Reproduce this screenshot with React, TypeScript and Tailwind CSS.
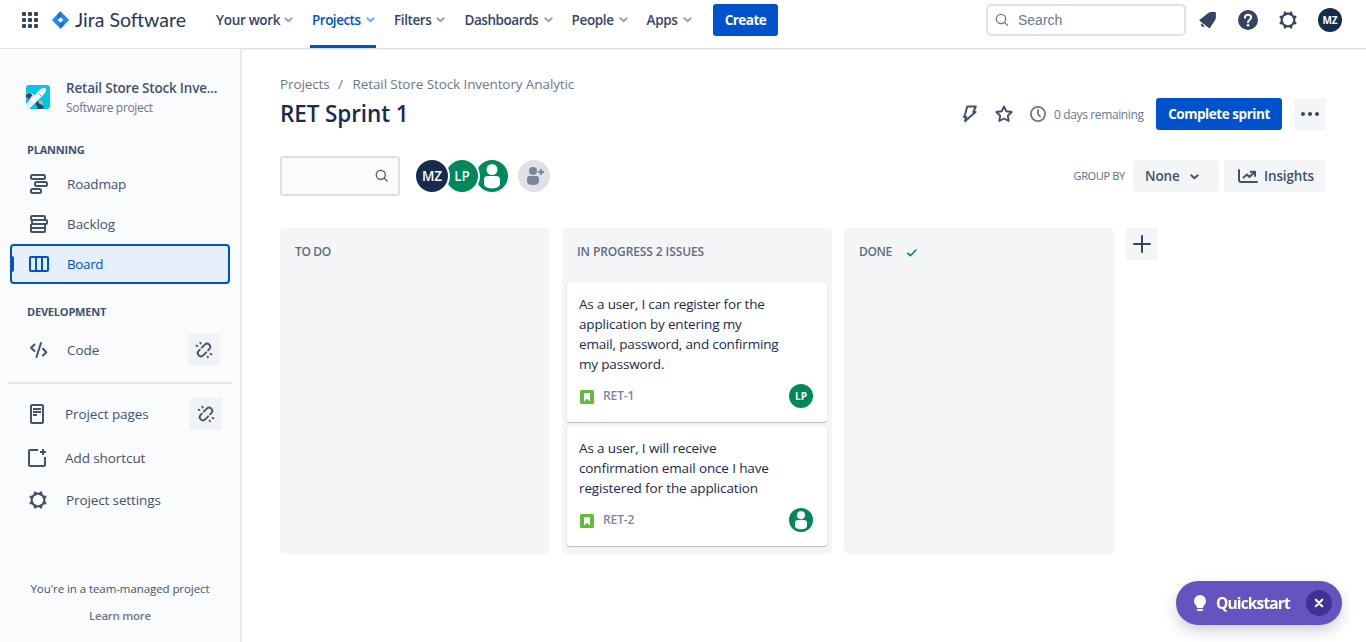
import React from "react";

const Chevron = ({ className }: { className: string }) => (
  <svg width="9" height="6" viewBox="0 0 9 6" className={className} fill="none" stroke="currentColor" strokeWidth="1.9" strokeLinecap="round" strokeLinejoin="round">
    <path d="M1.3 1.2 4.5 4.2 7.7 1.2" />
  </svg>
);

const SearchIcon = ({ size }: { size: number }) => (
  <svg width={size} height={size} viewBox="0 0 14 14" fill="none" stroke="currentColor" strokeWidth="1.3" strokeLinecap="round">
    <circle cx="6" cy="6" r="4.7" />
    <path d="M9.5 9.5 12.6 12.4" />
  </svg>
);

const teeth = [22.5, 67.5, 112.5, 157.5, 202.5, 247.5, 292.5, 337.5];

const Gear = () => (
  <svg width="20" height="20" viewBox="0 0 20 20" fill="none" stroke="currentColor">
    <circle cx="10" cy="10" r="6.4" strokeWidth="2.1" />
    {teeth.map((a) => (
      <path key={a} d="M10 2.3V3.5" strokeWidth="2.8" strokeLinecap="round" transform={`rotate(${a} 10 10)`} />
    ))}
  </svg>
);

const Person = ({ size }: { size: number }) => (
  <svg width={size} height={size} viewBox="0 0 32 32">
    <circle cx="16" cy="16" r="16" fill="#00875a" />
    <circle cx="16" cy="9.5" r="5.5" fill="#fff" />
    <path d="M8 19.500c0-2.400 1.600-3.500 4-3.500h8c2.400 0 4 1.100 4 3.500V24c0 2.600-3.600 4.400-8 4.400S8 26.600 8 24Z" fill="#fff" />
  </svg>
);

const Unlink = () => (
  <svg width="18" height="18" viewBox="0 0 18 18" fill="none" stroke="currentColor" strokeWidth="1.8" strokeLinecap="round">
    <path d="M6.800 6.700 9.800 3.700A3.100 3.100 0 0 1 14.300 8.200L13.100 9.400" />
    <path d="M11.200 11.300 8.200 14.300A3.100 3.100 0 0 1 3.700 9.800L4.900 8.600" />
    <path d="M5.300 1.600 5.600 2.500M1.500 4.600 2.500 5M12.600 15.500 12.900 16.400M15.500 13 16.500 13.400" />
  </svg>
);

const navItems = [
  { label: "Your work", w: "w-[96px]", t: "w-[68px]", track: "tracking-[-0.3px]", active: false },
  { label: "Projects", w: "w-[82px]", t: "w-[54px]", track: "tracking-[-0.5px]", active: true },
  { label: "Filters", w: "w-[70.5px]", t: "w-[41.5px]", track: "tracking-[-0.4px]", active: false },
  { label: "Dashboards", w: "w-[107px]", t: "w-[79px]", track: "tracking-[-0.45px]", active: false },
  { label: "People", w: "w-[75px]", t: "w-[47px]", track: "tracking-[-0.35px]", active: false },
  { label: "Apps", w: "w-[66.5px]", t: "w-[36px]", track: "tracking-[-0.3px]", active: false },
];

function Header() {
  return (
    <header className="flex h-[49px] shrink-0 items-start border-b border-[#dfe1e6] bg-white shadow-[0_1px_1px_#f1f2f4]">
      <div className="flex h-10 w-[52px] items-center pl-[22px]">
        <svg width="16" height="16" viewBox="0 0 16 16" fill="#344563">
          {[0, 6, 12].map((y) => [0, 6, 12].map((x) => <rect key={`${x}-${y}`} x={x} y={y} width="4" height="4" rx="1" />))}
        </svg>
      </div>
      <div className="flex h-10 w-[164px] items-center">
        <svg width="17" height="18" viewBox="0 0 17 18">
          <path d="M8.500 0.300 16.700 8.400Q17.200 9 16.700 9.600L8.500 17.700 0.300 9.600Q-.2 9 .3 8.400Z" fill="#2684ff" />
          <path d="M8.500.3 9 6.200 6.200 9 5.300 3.700Z" fill="#1868db" />
          <path d="M8.500 17.700 8 11.800 10.800 9 11.700 14.300Z" fill="#1868db" />
          <path d="M8.500 6.200 11.300 9 8.500 11.800 5.700 9Z" fill="#fff" />
        </svg>
        <span className="ml-[6px] whitespace-nowrap font-['Lato'] text-[19.5px] leading-6 text-[#253858]">Jira Software</span>
      </div>
      {navItems.map((n) => (
        <div key={n.label} className={`flex h-12 items-start ${n.w} ${n.active ? "text-[#0052cc]" : "text-[#344563]"}`}>
          <div className={n.active ? "-ml-0.5 flex h-12 w-[66px] items-start border-b-[3px] border-[#0052cc] pl-0.5" : "flex"}>
            <div className="flex h-10 items-center">
              <span className={`whitespace-nowrap text-[13.5px] font-semibold ${n.t} ${n.track}`}>{n.label}</span>
              <Chevron className="shrink-0 opacity-50" />
            </div>
          </div>
        </div>
      ))}
      <button className="mt-1 h-8 w-[65px] rounded-[3px] bg-[#0052cc] text-[13.5px] font-bold tracking-[-0.5px] text-white">Create</button>
      <div className="ml-auto mt-1 flex h-8 w-[200px] items-center rounded-[5px] border-2 border-[#dfe1e6] pl-[7px] text-[#6b778c]">
        <SearchIcon size={14} />
        <span className="ml-[9px] font-['Liberation_Sans'] text-[14px]">Search</span>
      </div>
      <div className="flex h-10 w-[180px] items-center text-[#344563]">
        <svg width="18" height="18" viewBox="0 0 18 18" className="ml-[13px]" fill="currentColor">
          <path d="M.8 9.900C.3 9.300.6 8.600 1.300 8.300L9.300 1.900C10.600.9 12 .8 13.300 1H16.200Q16.800 1 16.900 1.700V5.600C17 7 16.700 8.200 16 9.300L11.200 16.500C10.700 17.100 10 17.200 9.500 16.700Z" />
          <path d="M2.600 12.200A2.100 2.100 0 1 0 5.600 15.200Z" />
        </svg>
        <svg width="20" height="20" viewBox="0 0 20 20" className="ml-[21px]" fill="none">
          <circle cx="10" cy="10" r="10" fill="currentColor" />
          <path d="M6.900 7.800C6.900 5.900 8.200 4.800 10 4.800s3.100 1.100 3.100 2.700c0 2.100-3.100 2.300-3.100 4.800" stroke="#fff" strokeWidth="2" strokeLinecap="round" />
          <circle cx="10" cy="15.300" r="1.300" fill="#fff" />
        </svg>
        <div className="ml-5"><Gear /></div>
        <div className="ml-5 flex size-6 items-center justify-center rounded-full bg-[#172b4d] text-[10px] font-bold text-white">MZ</div>
      </div>
    </header>
  );
}

function Sidebar() {
  return (
    <aside className="flex w-[242px] shrink-0 flex-col border-r-2 border-[#e9eaec] bg-[#fafbfc] text-[13.5px] tracking-[-0.08px] text-[#42526e]">
      <div className="flex h-[89px] pl-[26px] pt-[29px]">
        <svg width="24" height="24" viewBox="0 0 24 24" className="mt-[7px] shrink-0">
          <rect width="24" height="24" rx="3" fill="#00c7e6" />
          <path d="M0 8.500 3.500 7 8 9.500 8.500 12 5 15 0 11.500Z" fill="#dfe1e6" />
          <path d="M0 9.500 3.500 7.500 6.500 10 3.500 14 0 12Z" fill="#344563" />
          <path d="M9.500 18 13 15.500 17.500 22V24H12Z" fill="#344563" />
          <path d="M13 14.500 17 17 16 20 12.500 18Z" fill="#b3bac5" />
          <path d="M0 19 14 4.500Q17.500 2 20 3.200 20.800 6 18 9L3 24H1L0 23Z" fill="#fff" />
          <path d="M0 19 5 16 8 19 3 24H1L0 23Z" fill="#ebecf0" />
          <path d="M13 9 15 11" stroke="#8993a4" />
        </svg>
        <div className="ml-4 h-10">
          <div className="whitespace-nowrap font-semibold leading-5 tracking-[-0.2px]">Retail Store Stock Inve...</div>
          <div className="whitespace-nowrap text-[12px] leading-5 tracking-[-0.33px] text-[#6b778c]">Software project</div>
        </div>
      </div>
      <div className="h-[26px] pl-[27px] pt-1 text-[11px] font-bold leading-4 tracking-[-0.2px]">PLANNING</div>
      <div className="flex h-10 items-center pl-[29px]">
        <svg width="20" height="20" viewBox="0 0 20 20" fill="none" stroke="currentColor" strokeWidth="2">
          <rect x="2" y="1" width="14" height="4" rx="1.500" /><rect x="6" y="8" width="12" height="4" rx="1.500" /><rect x="2" y="15" width="10" height="4" rx="1.500" />
        </svg>
        <span className="ml-[18px] tracking-[-0.2px]">Roadmap</span>
      </div>
      <div className="flex h-10 items-center pl-[29px]">
        <svg width="20" height="20" viewBox="0 0 20 20" fill="none" stroke="currentColor" strokeWidth="2">
          <rect x="2" y="2" width="14" height="4" rx="1" /><rect x="3" y="6" width="15" height="4" rx="1" /><path d="M2 10V17Q2 18 3 18H15Q16 18 16 17V10M2 14H16" />
        </svg>
        <span className="ml-[18px]">Backlog</span>
      </div>
      <div className="ml-[10px] flex h-10 w-[220px] items-center rounded-[4px] border-2 border-[#0052cc] bg-[#e6effc] text-[#0052cc]">
        <div className="h-4 w-0.5 rounded-r-[2px] bg-[#0052cc]" />
        <svg width="20" height="16" viewBox="0 0 20 16" fill="none" stroke="currentColor" strokeWidth="2" className="ml-[15px]">
          <rect x="1" y="1" width="18" height="14" rx="1" /><path d="M7 1V15M13 1V15" />
        </svg>
        <span className="ml-[18px] tracking-[-0.4px]">Board</span>
      </div>
      <div className="h-[46px] pl-[27px] pt-5 text-[11px] font-bold leading-4 tracking-[-0.2px]">DEVELOPMENT</div>
      <div className="flex h-10 items-center pl-[29px]">
        <svg width="20" height="18" viewBox="0 0 20 18" fill="none" stroke="currentColor" strokeWidth="2" strokeLinecap="round" strokeLinejoin="round">
          <path d="M5.500 3.500 2 6.700 5.500 10M14 7.800 17.300 11.200 14 14.500M12 2 7.500 16" />
        </svg>
        <span className="ml-[18px]">Code</span>
        <div className="ml-auto mr-5 flex size-8 items-center justify-center rounded-[3px] bg-[#f1f2f6]"><Unlink /></div>
      </div>
      <div className="mx-2 mt-3 h-0.5 shrink-0 bg-[#e6e7ea]" />
      <div className="mt-[10px] flex h-10 items-center pl-[29px]">
        <svg width="16" height="20" viewBox="0 0 16 20" fill="none" stroke="currentColor" strokeWidth="2">
          <rect x="2" y="1" width="12" height="18" rx="1" /><path d="M4 5H12M4 8H12M4 11H8" strokeWidth="1.800" />
        </svg>
        <span className="ml-5">Project pages</span>
        <div className="ml-auto mr-[18px] flex size-8 items-center justify-center rounded-[3px] bg-[#f1f2f6]"><Unlink /></div>
      </div>
      <div className="flex h-12 items-center pl-[27px]">
        <svg width="20" height="20" viewBox="0 0 20 20" fill="none" stroke="currentColor" strokeWidth="2">
          <path d="M11 2H3Q2 2 2 3V17Q2 18 3 18H17Q18 18 18 17V9" /><path d="M16 1V7M13 4H19" />
        </svg>
        <span className="ml-[18px]">Add shortcut</span>
      </div>
      <div className="flex h-9 items-center pl-[28px]">
        <Gear />
        <span className="ml-[18px] tracking-[-0.12px]">Project settings</span>
      </div>
      <div className="mt-[61px] text-center text-[11.500px] leading-5 tracking-[-0.08px]">You're in a team-managed project</div>
      <div className="mt-[7px] text-center text-[11.500px] font-semibold leading-5 tracking-[-0.250px] text-[#6b778c]">Learn more</div>
    </aside>
  );
}

const Story = () => (
  <svg width="14" height="14" viewBox="0 0 14 14">
    <rect width="14" height="14" rx="1.500" fill="#63ba3c" />
    <path d="M4 4Q4 3 5 3H9Q10 3 10 4V11.500L7 8.800 4 11.500Z" fill="#fff" />
  </svg>
);

function Card({ lines, id, height, track, children }: { lines: string[]; id: string; height: string; track: string; children: React.ReactNode }) {
  return (
    <article className={`mx-[5px] mb-1 flex flex-col rounded-[3px] bg-white px-3 pt-3 shadow-[0_1px_1px_rgba(9,30,66,0.25),0_0_1px_rgba(9,30,66,0.2)] ${height}`}>
      {lines.map((l) => (
        <p key={l} className={`whitespace-nowrap text-[13.5px] leading-5 text-[#172b4d] ${track}`}>{l}</p>
      ))}
      <div className="mt-[10px] flex h-6 items-center">
        <div className="ml-px mt-[2px]"><Story /></div>
        <span className="ml-[9px] text-[12px] font-semibold tracking-[-0.1px] text-[#7a869a]">{id}</span>
        <div className="ml-auto mr-[2px]">{children}</div>
      </div>
    </article>
  );
}

function Board() {
  return (
    <div className="mt-8 flex gap-3">
      <section className="h-[326px] w-[270px] rounded-[5px] bg-[#f4f5f7] pl-[15px] pt-4 text-[12px] font-semibold leading-4 tracking-[-0.35px] text-[#5e6c84]">TO DO</section>
      <section className="h-[326px] w-[270px] rounded-[5px] bg-[#f4f5f7]">
        <h2 className="h-[54px] pl-[15px] pt-4 text-[12px] font-semibold leading-4 tracking-[-0.1px] text-[#5e6c84]">IN PROGRESS 2 ISSUES</h2>
        <Card height="h-[140px]" track="tracking-[-0.17px]" id="RET-1" lines={["As a user, I can register for the", "application by entering my", "email, password, and confirming", "my password."]}>
          <div className="flex size-6 items-center justify-center rounded-full bg-[#00875a] text-[10px] font-bold text-white">LP</div>
        </Card>
        <Card height="h-[120px]" track="tracking-[-0.13px]" id="RET-2" lines={["As a user, I will receive", "confirmation email once I have", "registered for the application"]}>
          <Person size={24} />
        </Card>
      </section>
      <section className="flex h-[326px] w-[270px] items-start rounded-[5px] bg-[#f4f5f7] pl-[15px] pt-4 text-[12px] font-semibold leading-4 tracking-[-0.4px] text-[#5e6c84]">
        <span className="w-[47px]">DONE</span>
        <svg width="12" height="10" viewBox="0 0 12 10" className="mt-1" fill="none" stroke="#00875a" strokeWidth="1.600" strokeLinecap="round" strokeLinejoin="round"><path d="M1.800 5.300 4.300 7.700 10 2" /></svg>
      </section>
      <button className="flex size-8 items-center justify-center rounded-[3px] bg-[#f4f5f7] text-[#344563]">
        <svg width="18" height="18" viewBox="0 0 18 18" fill="none" stroke="currentColor" strokeWidth="2" strokeLinecap="round"><path d="M9 1V17M1 9H17" /></svg>
      </button>
    </div>
  );
}

export default function App() {
  return (
    <div className="flex h-[642px] w-[1366px] flex-col overflow-hidden bg-white font-['Open_Sans','Noto_Sans',sans-serif]">
      <Header />
      <div className="flex min-h-0 flex-1">
        <Sidebar />
        <main className="min-w-0 flex-1 pl-[38px] pr-10 pt-[25px]">
          <div className="flex h-5 items-center text-[13.5px] tracking-[-0.1px] text-[#6b778c]">
            <span className="w-[58px]">Projects</span>
            <span className="w-[14.5px]">/</span>
            <span>Retail Store Stock Inventory Analytic</span>
          </div>
          <div className="mt-1 flex h-8 items-center text-[#42526e]">
            <h1 className="text-[22.500px] font-semibold tracking-[-0.100px] text-[#172b4d]">RET Sprint 1</h1>
            <svg width="16" height="18" viewBox="0 0 16 18" className="ml-auto" fill="none" stroke="currentColor" strokeWidth="2" strokeLinejoin="round">
              <path d="M5.200 1.500H13.800L11.300 7H13.500L3 16.300 4.300 12H2L3.500 8Z" />
            </svg>
            <svg width="18" height="18" viewBox="0 0 18 18" className="ml-[17px]" fill="none" stroke="currentColor" strokeWidth="1.900" strokeLinejoin="round">
              <path d="M9 1.500 11.300 6.300 16.700 7 12.800 10.700 13.700 16 9 13.500 4.300 16 5.200 10.700 1.300 7 6.700 6.300Z" />
            </svg>
            <svg width="16" height="16" viewBox="0 0 16 16" className="ml-[17px] text-[#6b778c]" fill="none" stroke="currentColor" strokeWidth="1.800" strokeLinecap="round">
              <circle cx="8" cy="8" r="7.100" /><path d="M8 4V8L10 10.500" />
            </svg>
            <span className="ml-2 mt-0.5 w-[102px] whitespace-nowrap text-[12px] tracking-[-0.370px] text-[#6b778c]">0 days remaining</span>
            <button className="h-8 w-[126px] whitespace-nowrap rounded-[3px] bg-[#0052cc] text-[13.5px] font-bold tracking-[-0.450px] text-white">Complete sprint</button>
            <button className="ml-3 flex size-8 items-center justify-center rounded-[3px] bg-[#f4f5f7]">
              <svg width="18" height="4" viewBox="0 0 18 4" fill="#344563"><circle cx="2" cy="2" r="2" /><circle cx="9" cy="2" r="2" /><circle cx="16" cy="2" r="2" /></svg>
            </button>
          </div>
          <div className="mt-[26px] flex h-10 items-center text-[#42526e]">
            <div className="flex h-10 w-[120px] items-center justify-end rounded-[3px] border-2 border-[#dfe1e6] bg-[#fafbfc] pr-[9.5px]"><SearchIcon size={13.5} /></div>
            <div className="ml-[14px] flex -space-x-1.5">
              <div className="z-30 flex size-9 items-center justify-center rounded-full border-2 border-white bg-[#172b4d] text-[13.5px] font-semibold text-white">MZ</div>
              <div className="z-20 flex size-9 items-center justify-center rounded-full border-2 border-white bg-[#00875a] text-[13.5px] font-semibold text-white">LP</div>
              <div className="z-10 rounded-full border-2 border-white"><Person size={32} /></div>
            </div>
            <svg width="32" height="32" viewBox="0 0 32 32" className="ml-2">
              <circle cx="16" cy="16" r="16" fill="#dfe1e6" />
              <circle cx="15" cy="11" r="4" fill="#7a869a" />
              <path d="M9 18.500Q9 16 11.500 16H18.500Q21 16 21 18.500V21.500Q21 25 15 25T9 21.500Z" fill="#7a869a" />
              <path d="M23 9V15M20 12H26" stroke="#7a869a" strokeWidth="2" />
            </svg>
            <span className="ml-auto w-[59.5px] whitespace-nowrap text-[11px] tracking-[-0.350px] text-[#5e6c84]">GROUP BY</span>
            <button className="flex h-8 w-[86px] items-center rounded-[3px] bg-[#f4f5f7] pl-3 text-[13.5px] font-semibold tracking-[-0.150px]"><span className="w-[45px] text-left">None</span><Chevron className="mt-px" /></button>
            <button className="ml-[5px] flex h-8 w-[102px] items-center rounded-[3px] bg-[#f4f5f7] pl-[14px] text-[13.5px] font-semibold tracking-[-0.150px]">
              <svg width="20" height="16" viewBox="0 0 20 16" fill="none" stroke="currentColor" strokeWidth="2" strokeLinecap="round" strokeLinejoin="round"><path d="M1 2V12Q1 14 3 14H19" /><path d="M5.500 9.500 9 6.500 11.500 9 16.500 4M12.800 3.700H17V8" /></svg>
              <span className="ml-[6px]">Insights</span>
            </button>
          </div>
          <Board />
        </main>
      </div>
      <div className="fixed left-[1176px] top-[581px] flex h-11 w-[166px] items-center rounded-full bg-[#6554c0] text-white shadow-[0_6px_16px_-2px_rgba(9,30,66,0.25)]">
        <svg width="12" height="16" viewBox="0 0 12 16" className="ml-[18px]" fill="#fff"><path d="M6 0a6 6 0 0 0-6 6c0 2.200 1.200 3.500 2.200 4.700.5.600.8 1.300.8 2.300h6c0-1 .3-1.700.8-2.300C10.800 9.500 12 8.200 12 6a6 6 0 0 0-6-6Z" /><path d="M3 14H9V14.800Q9 16 7.800 16H4.200Q3 16 3 14.800Z" /></svg>
        <span className="ml-[10px] mt-0.5 w-[90px] text-[15.500px] font-bold tracking-[-0.850px]">Quickstart</span>
        <div className="flex size-[26px] items-center justify-center rounded-full bg-[#403294]">
          <svg width="10" height="10" viewBox="0 0 10 10" stroke="#fff" strokeWidth="2.200" strokeLinecap="round"><path d="M1.800 1.800 8.200 8.200M8.200 1.800 1.800 8.200" /></svg>
        </div>
      </div>
    </div>
  );
}
